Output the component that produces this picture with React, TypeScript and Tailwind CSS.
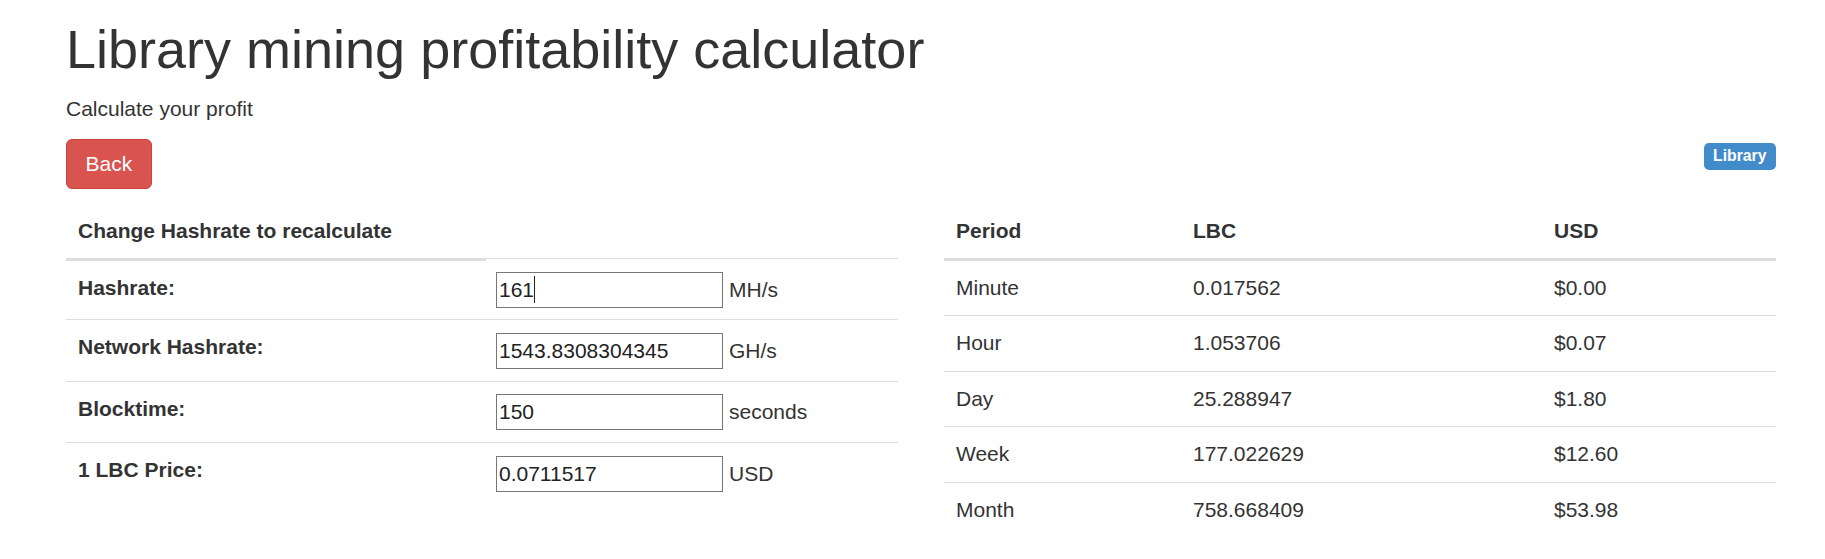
import React from "react";

const font = { fontFamily: '"Liberation Sans", Arial, Helvetica, sans-serif' };

const leftRows = [
  { label: "Hashrate:", value: "161", unit: "MH/s", caret: true },
  { label: "Network Hashrate:", value: "1543.8308304345", unit: "GH/s" },
  { label: "Blocktime:", value: "150", unit: "seconds" },
  { label: "1 LBC Price:", value: "0.0711517", unit: "USD" },
];

const rightRows = [
  ["Minute", "0.017562", "$0.00"],
  ["Hour", "1.053706", "$0.07"],
  ["Day", "25.288947", "$1.80"],
  ["Week", "177.022629", "$12.60"],
  ["Month", "758.668409", "$53.98"],
];

export default function App() {
  return (
    <div
      className="w-[1825px] h-[559px] bg-white text-[#333] pl-[66px] pr-[49px] pt-[20px] overflow-hidden"
      style={font}
    >
      <h1 className="text-[54px] leading-[59.4px] font-normal m-0 mb-[15px]">
        Library mining profitability calculator
      </h1>
      <p className="text-[21px] leading-[30px] mb-[15px]">Calculate your profit</p>
      <div className="flex justify-between items-start">
        <button className="h-[50px] px-[18.5px] bg-[#d9534f] border border-[#d43f3a] rounded-[6px] text-white text-[21px] leading-[30px]">
          Back
        </button>
        <span className="mt-[4px] h-[27px] px-[9.5px] pb-[2px] flex items-center bg-[#428bca] text-white font-bold text-[15.75px] leading-none rounded-[5px]">
          Library
        </span>
      </div>

      <div className="flex justify-between mt-[15px] text-[21px] leading-[30px]">
        {/* Left table */}
        <div className="w-[832px]">
          <div className="flex h-[57px] items-start">
            <div className="w-[420px] h-[57px] px-[12px] pt-[12px] font-bold border-b-[3px] border-[#ddd]">
              Change Hashrate to recalculate
            </div>
            <div className="flex-1 h-[55px] border-b border-[#ddd]" />
          </div>
          {leftRows.map((r, i) => (
            <div
              key={r.label}
              className={
                i === 0
                  ? "flex h-[58px]"
                  : "flex h-[61.5px] border-t border-[#ddd]"
              }
            >
              <div className="w-[420px] px-[12px] pt-[12px] font-bold">{r.label}</div>
              <div className="flex-1 px-[10px] flex items-center">
                <div className="flex items-baseline">
                  <div className="relative">
                    <input
                      readOnly
                      value={r.value}
                      className="w-[227px] h-[36px] border border-[#767676] pl-[2px] text-[21px] text-[#222] bg-white outline-none"
                      style={font}
                    />
                    {r.caret && (
                      <span className="absolute left-[38px] top-[4px] w-[1px] h-[27px] bg-[#222]" />
                    )}
                  </div>
                  <span className="ml-[6px]">{r.unit}</span>
                </div>
              </div>
            </div>
          ))}
        </div>

        {/* Right table */}
        <div className="w-[832px]">
          <div className="grid grid-cols-[237px_361px_1fr] h-[57px] border-b-[3px] border-[#ddd] font-bold">
            <div className="px-[12px] pt-[12px]">Period</div>
            <div className="px-[12px] pt-[12px]">LBC</div>
            <div className="px-[12px] pt-[12px]">USD</div>
          </div>
          {rightRows.map((r, i) => (
            <div
              key={r[0]}
              className={
                i === 0
                  ? "grid grid-cols-[237px_361px_1fr] h-[54px]"
                  : "grid grid-cols-[237px_361px_1fr] h-[55.5px] border-t border-[#ddd]"
              }
            >
              {r.map((c) => (
                <div key={c} className="px-[12px] pt-[12px]">
                  {c}
                </div>
              ))}
            </div>
          ))}
        </div>
      </div>
    </div>
  );
}
